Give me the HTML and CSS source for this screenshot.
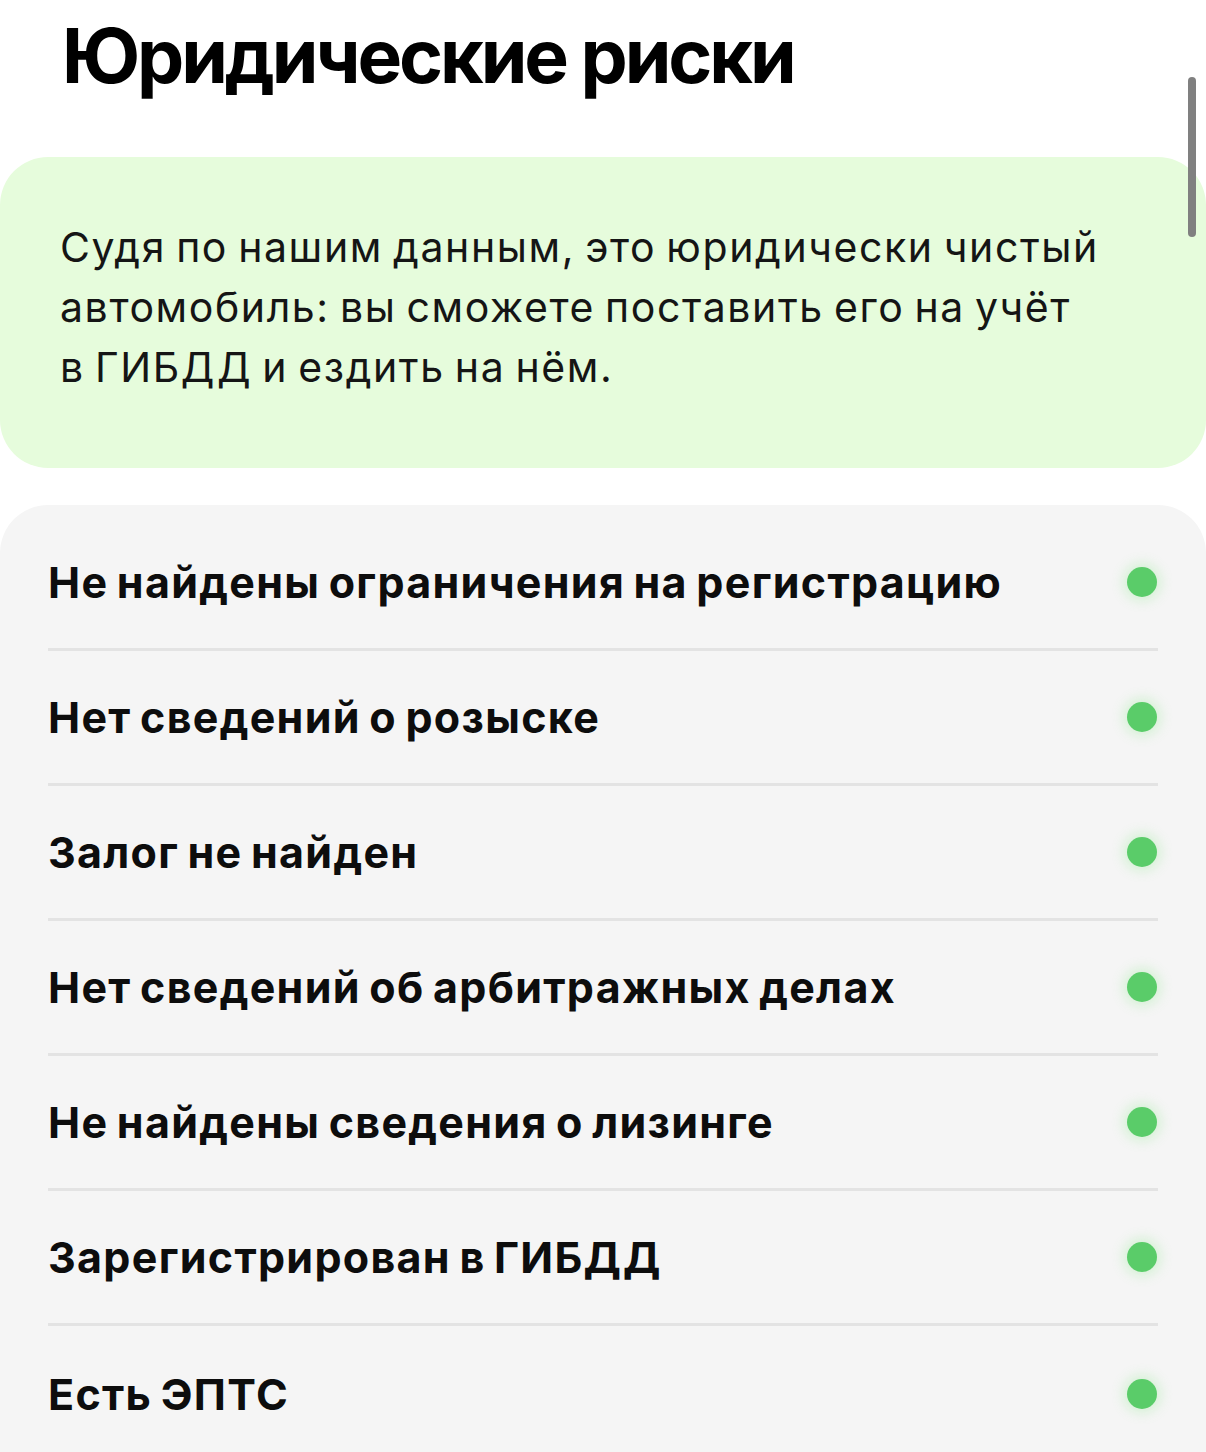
FILE: index.html
```html
<!DOCTYPE html>
<html lang="ru">

<head>
    <meta charset="UTF-8">
    <meta name="viewport" content="width=device-width, initial-scale=1.0">
    <title>Юридические риски</title>
    <link rel="stylesheet" href="styles.css">
</head>

<body>
    <div class="page">
        <h1 class="title">Юридические риски</h1>

        <div class="summary">
            <p>Судя по нашим данным, это юридически чистый автомобиль: вы сможете поставить его на учёт в&nbsp;ГИБДД и ездить на нём.</p>
        </div>

        <div class="checks">
            <div class="check">
                <span class="check-name">Не найдены ограничения на регистрацию</span>
                <span class="dot"></span>
            </div>
            <div class="check">
                <span class="check-name">Нет сведений о розыске</span>
                <span class="dot"></span>
            </div>
            <div class="check">
                <span class="check-name">Залог не найден</span>
                <span class="dot"></span>
            </div>
            <div class="check">
                <span class="check-name">Нет сведений об арбитражных делах</span>
                <span class="dot"></span>
            </div>
            <div class="check">
                <span class="check-name">Не найдены сведения о лизинге</span>
                <span class="dot"></span>
            </div>
            <div class="check">
                <span class="check-name">Зарегистрирован в ГИБДД</span>
                <span class="dot"></span>
            </div>
            <div class="check">
                <span class="check-name">Есть ЭПТС</span>
                <span class="dot"></span>
            </div>
        </div>
    </div>

    <!-- полоса прокрутки поверх контента -->
    <div class="scroll-thumb"></div>
</body>

</html>
```

FILE: styles.css
```css
body {
    margin: 0;
    background: #fff;
    font-family: Inter, "Noto Sans", sans-serif;
    color: #000;
    overflow: hidden;
}

.page {
    display: flex;
    flex-direction: column;
}

.title {
    margin: 0;
    padding: 16px 0 0 62px;
    height: 157px;
    box-sizing: border-box;
    font-size: 75px;
    font-weight: 700;
    letter-spacing: -3.1px;
    line-height: 80px;
}

.summary {
    background: #e6fcdc;
    border-radius: 48px;
    height: 311px;
    padding: 0 60px 12px;
    display: flex;
    align-items: center;
    box-sizing: border-box;
}

.summary p {
    margin: 0;
    font-size: 41px;
    line-height: 60px;
    letter-spacing: 1.6px;
    word-spacing: -3px;
    color: #151515;
}

.checks {
    margin-top: 37px;
    background: #f5f5f5;
    border-radius: 48px 48px 0 0;
    padding: 11px 48px 0 48px;
    display: flex;
    flex-direction: column;
}

.check {
    height: 135px;
    display: flex;
    align-items: center;
    justify-content: space-between;
    border-bottom: 3px solid #e3e3e3;
    box-sizing: border-box;
}

.check:last-child {
    border-bottom: none;
}

.check-name {
    font-size: 43px;
    font-weight: 700;
    letter-spacing: 1.3px;
    word-spacing: -3px;
    color: #0d0d0d;
}

.dot {
    width: 30px;
    height: 30px;
    margin-right: 1px;
    border-radius: 50%;
    background: #5acc69;
    box-shadow: 0 0 12px 4px rgba(120, 230, 120, 0.25);
}

.scroll-thumb {
    position: absolute;
    top: 77px;
    left: 1188px;
    width: 8px;
    height: 160px;
    border-radius: 4px;
    background: #808080;
}
```
